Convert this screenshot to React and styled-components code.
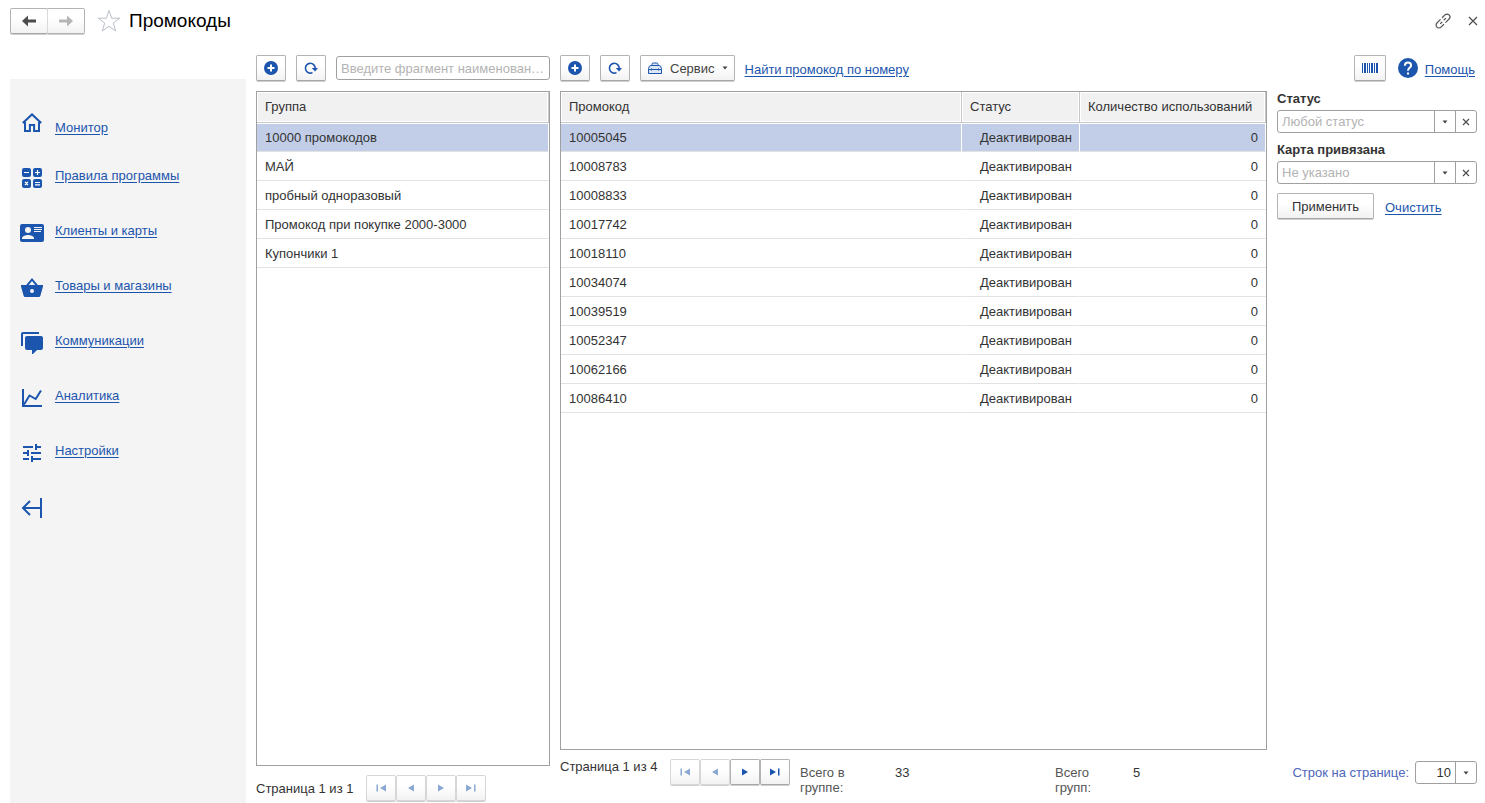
import React from 'react';
import styled, { createGlobalStyle, css } from 'styled-components';

const GlobalStyle = createGlobalStyle`
    * {
        box-sizing: border-box;
    }

    body {
        margin: 0;
        background: #fff;
        color: #333;
        font-family: "Liberation Sans", Arial, sans-serif;
        font-size: 13px;
        line-height: 15px;
    }

    button, input, select {
        font: inherit;
        color: inherit;
    }
`;

const Page = styled.div`
    display: flex;
    flex-direction: column;
    min-height: 100vh;
`;

const Header = styled.header`
    display: flex;
    align-items: center;
    padding: 8px 2px 7px 10px;
`;

const History = styled.div`
    display: flex;
`;

const raised = css`
    display: inline-flex;
    align-items: center;
    justify-content: center;
    height: 26px;
    padding: 0;
    background: linear-gradient(#fff 40%, #f2f2f2);
    border: 1px solid #b3b3b3;
    border-bottom-color: #a6a6a6;
    border-radius: 2px;
    box-shadow: 0 1px 0 #d0d0d0;
    cursor: pointer;

    &:disabled {
        border-color: #d6d6d6;
        cursor: default;
    }
`;

const HistoryButton = styled.button`
    ${raised}
    width: 38px;

    &:disabled {
        border-color: #b3b3b3;
    }

    & + & {
        border-left-color: #d9d9d9;
        margin-left: -1px;
    }
`;

const PlainButton = styled.button`
    display: inline-flex;
    align-items: center;
    justify-content: center;
    width: ${props => props.$size || 20}px;
    height: ${props => props.$size || 20}px;
    padding: 0;
    background: none;
    border: none;
    cursor: pointer;
`;

const Favourite = styled(PlainButton)`
    margin: 0 8px 0 12px;
`;

const Title = styled.h1`
    flex: 1;
    margin: 0;
    color: #000;
    font-size: 19px;
    font-weight: 400;
    line-height: 24px;
`;

const WindowTools = styled.div`
    display: flex;
    gap: 10px;
`;

const Body = styled.div`
    display: flex;
    flex: 1;
    gap: 10px;
    padding: 0 8px 0 10px;
`;

const Sidebar = styled.nav`
    display: flex;
    flex-direction: column;
    flex: 0 0 236px;
    margin-top: 38px;
    padding: 32px 10px;
    background: #f4f4f4;
`;

const MenuList = styled.div`
    display: flex;
    flex-direction: column;
    align-items: flex-start;
    gap: 31px;
    margin-top: 28px;
`;

const MenuItem = styled.a`
    display: flex;
    gap: 11px;
    color: #1c55ae;
    line-height: 20px;
    text-decoration: none;

    svg {
        flex: none;
    }

    span {
        text-decoration: underline;
        text-underline-offset: 2px;
    }
`;

const HomeItem = styled(MenuItem)`
    align-items: flex-end;
    height: 27px;

    svg {
        align-self: flex-start;
    }
`;

const Collapse = styled(PlainButton)`
    color: #1c55ae;
`;

const Groups = styled.section`
    display: flex;
    flex-direction: column;
    flex: 0 0 294px;
    gap: 9px;
    padding: 14px 0 2px;
`;

const Promo = styled.section`
    display: flex;
    flex-direction: column;
    flex: 1;
    min-width: 0;
    gap: 9px;
    padding: 14px 0 8px;
`;

const Toolbar = styled.div`
    display: flex;
    align-items: center;
    gap: 10px;
    height: 27px;
    padding-bottom: 1px;
`;

const ToolButton = styled.button`
    ${raised}
    width: ${props => props.$width || 30}px;
    color: #1c55ae;
`;

const ServiceButton = styled.button`
    ${raised}
    gap: 7px;
    padding: 0 6px;
    color: #444;
`;

const Link = styled.a`
    color: #1c55ae;
    line-height: 17px;
    padding-top: 2px;
    text-decoration: underline;
    text-underline-offset: 2px;
`;

const HelpLink = styled(Link)`
    display: flex;
    align-items: center;
    gap: 7px;
    padding: 0 2px;

    span {
        padding-top: 2px;
    }
`;

const Spacer = styled.div`
    flex: 1;
`;

const SearchInput = styled.input`
    flex: 1;
    min-width: 0;
    height: 24px;
    padding: 0 4px;
    border: 1px solid #a0a0a0;
    border-radius: 3px;
    text-overflow: ellipsis;

    &::placeholder {
        color: #b3b3b3;
    }
`;

const Split = styled.div`
    display: flex;
    flex: 1;
    gap: 10px;
`;

const TableFrame = styled.div`
    flex: 1;
    min-width: 0;
    border: 1px solid #a0a0a0;
`;

const Table = styled.table`
    width: 100%;
    table-layout: fixed;
    border-collapse: separate;
    border-spacing: 0;
`;

const HeadCell = styled.th`
    width: ${props => props.$width || 'auto'};
    height: 31px;
    padding: 0 8px 2px;
    background: #f1f1f1;
    border-right: 1px solid #c8c8c8;
    border-bottom: 1px solid #c8c8c8;
    box-shadow: inset 0 0 0 1px #fff;
    font-weight: 400;
    text-align: left;
    white-space: nowrap;
`;

const Row = styled.tr`
    background: ${props => (props.$selected ? '#c2cee8' : '#fff')};
`;

const Cell = styled.td`
    height: 29px;
    padding: 0 7px 0 8px;
    border-right: ${props => (props.$selected ? '1px solid #fff' : '1px solid transparent')};
    border-bottom: 1px solid #e2e2e2;
    box-shadow: inset 0 1px 0 #fff;
    text-align: ${props => props.$align || 'left'};
    white-space: nowrap;
`;

const Filters = styled.form`
    flex: 0 0 200px;
`;

const FilterField = styled.div`
    display: flex;
    flex-direction: column;
    gap: 4px;
    margin-bottom: 9px;

    label {
        font-weight: 700;
    }
`;

const Combo = styled.div`
    display: grid;
    grid-template-columns: 1fr 21px ${props => (props.$clearable ? '21px' : '')};
    width: ${props => props.$width || '100%'};
    height: 23px;
    border: 1px solid #a0a0a0;
    border-radius: 3px;
`;

const Select = styled.select`
    grid-row: 1;
    grid-column: 1 / 3;
    width: 100%;
    padding: 0 25px 0 4px;
    appearance: none;
    background: none;
    border: none;
    color: ${props => (props.$empty ? '#b3b3b3' : '#333')};
    text-align: ${props => props.$align || 'left'};
    text-align-last: ${props => props.$align || 'left'};
`;

const ComboArrow = styled.span`
    display: flex;
    grid-row: 1;
    grid-column: 2;
    align-items: center;
    justify-content: center;
    border-left: 1px solid #a0a0a0;
    pointer-events: none;
`;

const ComboClear = styled.button`
    display: flex;
    align-items: center;
    justify-content: center;
    padding: 0;
    background: none;
    border: none;
    border-left: 1px solid #a0a0a0;
    cursor: pointer;
`;

const FilterActions = styled.div`
    display: flex;
    align-items: center;
    gap: 11px;
`;

const ApplyButton = styled.button`
    ${raised}
    width: 97px;
`;

const Pager = styled.div`
    display: flex;
    align-items: ${props => props.$align || 'center'};
    gap: 10px;
`;

const PageText = styled.span`
    width: 100px;
    white-space: nowrap;
`;

const PagerButtons = styled.div`
    display: flex;
`;

const PagerButton = styled(ToolButton)`
    svg {
        opacity: ${props => (props.disabled ? 0.5 : 1)};
    }
`;

const Stats = styled.div`
    display: flex;
    gap: 10px;
    padding-top: 6px;
`;

const StatLabel = styled.span`
    width: ${props => props.$width}px;
    color: #555;
`;

const StatValue = styled.span`
    width: ${props => props.$width}px;
`;

const RowsPerPage = styled.div`
    display: flex;
    align-items: center;
    gap: 6px;
    padding-top: 2px;
    margin-left: auto;

    label {
        color: #4d66bb;
        white-space: nowrap;
    }
`;

const Icon = ({ size = 24, width = size, height = size, children }) => (
    <svg width={width} height={height} viewBox={`0 0 ${width} ${height}`} fill="currentColor" aria-hidden="true">
        {children}
    </svg>
);

const HistoryArrow = ({ forward }) => (
    <Icon width={14} height={12}>
        <path
            d="M0 6 6 0.5V4.500H14V7.500H6V11.500Z"
            fill={forward ? '#b5b5b5' : '#4d4d4d'}
            transform={forward ? 'rotate(180 7 6)' : undefined}
        />
    </Icon>
);

const StarIcon = () => (
    <Icon>
        <path
            d="M12 1.500 14.700 9.200H22.700L16.300 14.100 18.700 22 12 17.300 5.300 22 7.700 14.100 1.300 9.200H9.300Z"
            fill="none"
            stroke="#b9bec8"
        />
    </Icon>
);

const ChainIcon = () => (
    <Icon size={20}>
        <g fill="none" stroke="#555" strokeWidth="1.200" strokeLinecap="round" transform="rotate(-45 10 10)">
            <path d="M8 12.900H4.300a2.900 2.900 0 0 1 0-5.800H9" />
            <path d="M12 7.100H15.700a2.900 2.900 0 0 1 0 5.800H11" />
            <path d="M6.500 10H8.500M11.500 10H13.500" />
        </g>
    </Icon>
);

const CloseIcon = ({ size = 20, arm = 4 }) => (
    <Icon size={size}>
        <path
            d={`M${size / 2 - arm} ${size / 2 - arm}l${arm * 2} ${arm * 2}m0 ${-arm * 2}l${-arm * 2} ${arm * 2}`}
            stroke="#4d4d4d"
            strokeWidth="1.200"
        />
    </Icon>
);

const HomeIcon = () => (
    <Icon>
        <path
            d="M2.800 12 12 3.400 21.200 12M5 11V20H9.900V14H14.100V20H19V11"
            fill="none"
            stroke="currentColor"
            strokeWidth="2"
        />
    </Icon>
);

const RulesIcon = () => (
    <Icon>
        <rect x="2" y="2" width="9" height="9" rx="2" />
        <rect x="13" y="2" width="9" height="9" rx="2" />
        <rect x="2" y="13" width="9" height="9" rx="2" />
        <rect x="13" y="13" width="9" height="9" rx="2" />
        <path
            d="M4 6.500H9M15 6.500H20M17.500 4V9M15 16.500H20M15 18.800H20M5 16l3 3M8 16l-3 3"
            stroke="#fff"
            strokeWidth="1.200"
        />
    </Icon>
);

const CardIcon = () => (
    <Icon>
        <rect y="3" width="24" height="18" rx="2" />
        <g fill="#f4f4f4">
            <circle cx="8" cy="9" r="3" />
            <path d="M2 18V17C2 15 6 13.900 8 13.900S14 15 14 17V18Z" />
            <path d="M14 6H22V7H14ZM14 8H22V9H14ZM14 10H21V11H14Z" />
        </g>
    </Icon>
);

const BasketIcon = () => (
    <Icon>
        <path d="M1 9H6.200L12 2 17.800 9H23V10.500L20.300 20Q20 21 19 21H5Q4 21 3.700 20L1 10.500ZM8.800 9H15.200L12 5Z" fillRule="evenodd" />
        <circle cx="12" cy="15" r="2" fill="#f4f4f4" />
    </Icon>
);

const ChatIcon = () => (
    <Icon>
        <path d="M1 15V3Q1 1 3 1H19V3H3V15Z" />
        <path d="M7 5H21Q23 5 23 7V17Q23 19 21 19H17L13 23H12V19H7Q5 19 5 17V7Q5 5 7 5Z" />
    </Icon>
);

const ChartIcon = () => (
    <Icon>
        <path d="M3 3V20H22M4 18.500 9.500 9.500 15.700 13 21 4.500" fill="none" stroke="currentColor" strokeWidth="2" />
    </Icon>
);

const SettingsIcon = () => (
    <Icon>
        <path
            d="M3 6H13M16 3V9M16 6H21M3 12H9M8 9V15M11 12H21M3 18H9M12 15V21M12 18H21"
            fill="none"
            stroke="currentColor"
            strokeWidth="2"
        />
    </Icon>
);

const CollapseIcon = () => (
    <Icon>
        <path d="M21 2V22M20 12H3.500M10 5 3 12 10 19" fill="none" stroke="currentColor" strokeWidth="2" />
    </Icon>
);

const PlusIcon = () => (
    <Icon size={14}>
        <circle cx="7" cy="7" r="7" />
        <path d="M7 3.500V10.500M3.500 7H10.500" stroke="#fff" strokeWidth="2" />
    </Icon>
);

const RefreshIcon = () => (
    <Icon size={14}>
        <path d="M8.500 11.600A4.900 4.900 0 1 1 11.200 7.500" fill="none" stroke="currentColor" strokeWidth="1.600" />
        <path d="M7.800 7H14L11 10.400Z" />
    </Icon>
);

const ServiceIcon = () => (
    <Icon width={16} height={14}>
        <g fill="#dce6f7" stroke="#1c55ae">
            <path d="M5 4.500V3.300Q5 2 6.300 2H9.700Q11 2 11 3.300V4.500" />
            <path d="M4 4.500H12Q14 4.500 14.500 7.500V8.500H1.500V7.500Q2 4.500 4 4.500Z" />
            <path d="M1.500 8.500H14.500V12.500H1.500Z" />
            <path d="M4.500 7.500V9.500M11.500 7.500V9.500" />
        </g>
    </Icon>
);

const BarcodeIcon = () => (
    <Icon width={16} height={10}>
        <path d="M0 0H1V10H0ZM2 0H4V10H2ZM5 0H6V10H5ZM7 0H8V10H7ZM9 0H11V10H9ZM12 0H13V10H12ZM14 0H16V10H14Z" />
    </Icon>
);

const HelpIcon = () => (
    <Icon size={20}>
        <circle cx="10" cy="10" r="10" />
        <path d="M6.900 7.700Q6.900 4.600 10 4.600T13.100 7.400C13.100 9.500 10 9.500 10 12.700" fill="none" stroke="#fff" strokeWidth="2" />
        <path d="M9 14.500H11V16.500H9Z" fill="#fff" />
    </Icon>
);

const CaretIcon = () => (
    <Icon width={6} height={4}>
        <path d="M0.500 0.500H5.500L3 3.500Z" fill="#444" />
    </Icon>
);

const PagerIcon = ({ back, edge }) => (
    <Icon width={12} height={8}>
        <g transform={back ? 'rotate(180 6 4)' : undefined}>
            <path d={edge ? 'M1 0.500 7 4 1 7.500Z' : 'M3 0.500 9 4 3 7.500Z'} />
            {edge && <path d="M9 0.500H10.500V7.500H9Z" />}
        </g>
    </Icon>
);

const menu = [
    { label: 'Правила программы', icon: RulesIcon },
    { label: 'Клиенты и карты', icon: CardIcon },
    { label: 'Товары и магазины', icon: BasketIcon },
    { label: 'Коммуникации', icon: ChatIcon },
    { label: 'Аналитика', icon: ChartIcon },
    { label: 'Настройки', icon: SettingsIcon },
];

const groups = [
    '10000 промокодов',
    'МАЙ',
    'пробный одноразовый',
    'Промокод при покупке 2000-3000',
    'Купончики 1',
];

const promocodes = [
    '10005045', '10008783', '10008833', '10017742', '10018110',
    '10034074', '10039519', '10052347', '10062166', '10086410',
].map(code => ({ code, status: 'Деактивирован', uses: 0 }));

const PageButtons = ({ first, last }) => (
    <PagerButtons>
        <PagerButton type="button" disabled={first} aria-label="Первая страница"><PagerIcon back edge /></PagerButton>
        <PagerButton type="button" disabled={first} aria-label="Предыдущая страница"><PagerIcon back /></PagerButton>
        <PagerButton type="button" disabled={last} aria-label="Следующая страница"><PagerIcon /></PagerButton>
        <PagerButton type="button" disabled={last} aria-label="Последняя страница"><PagerIcon edge /></PagerButton>
    </PagerButtons>
);

const Filter = ({ id, label, empty, options, value, onChange }) => (
    <FilterField>
        <label htmlFor={id}>{label}</label>
        <Combo $clearable>
            <Select id={id} value={value} $empty={!value} onChange={event => onChange(event.target.value)}>
                <option value="">{empty}</option>
                {options.map(option => <option key={option}>{option}</option>)}
            </Select>
            <ComboArrow><CaretIcon /></ComboArrow>
            <ComboClear type="button" aria-label="Сбросить" onClick={() => onChange('')}>
                <CloseIcon size={10} arm={3} />
            </ComboClear>
        </Combo>
    </FilterField>
);

export default function App() {
    const [group, setGroup] = React.useState(groups[0]);
    const [code, setCode] = React.useState(promocodes[0].code);
    const [status, setStatus] = React.useState('');
    const [card, setCard] = React.useState('');
    const [rows, setRows] = React.useState('10');

    const handleClear = (event) => {
        event.preventDefault();
        setStatus('');
        setCard('');
    };

    return (
        <Page>
            <GlobalStyle />
            <Header>
                <History>
                    <HistoryButton type="button" aria-label="Назад"><HistoryArrow /></HistoryButton>
                    <HistoryButton type="button" aria-label="Вперед" disabled><HistoryArrow forward /></HistoryButton>
                </History>
                <Favourite type="button" $size={24} aria-label="В избранное"><StarIcon /></Favourite>
                <Title>Промокоды</Title>
                <WindowTools>
                    <PlainButton type="button" aria-label="Ссылка"><ChainIcon /></PlainButton>
                    <PlainButton type="button" aria-label="Закрыть"><CloseIcon /></PlainButton>
                </WindowTools>
            </Header>
            <Body>
                <Sidebar>
                    <HomeItem href="#"><HomeIcon /><span>Монитор</span></HomeItem>
                    <MenuList>
                        {menu.map(({ label, icon: MenuIcon }) => (
                            <MenuItem href="#" key={label}><MenuIcon /><span>{label}</span></MenuItem>
                        ))}
                        <Collapse type="button" $size={24} aria-label="Свернуть"><CollapseIcon /></Collapse>
                    </MenuList>
                </Sidebar>

                <Groups>
                    <Toolbar>
                        <ToolButton type="button" aria-label="Добавить группу"><PlusIcon /></ToolButton>
                        <ToolButton type="button" aria-label="Обновить группы"><RefreshIcon /></ToolButton>
                        <SearchInput aria-label="Поиск группы" placeholder="Введите фрагмент наименования" />
                    </Toolbar>
                    <TableFrame>
                        <Table>
                            <thead>
                                <tr><HeadCell>Группа</HeadCell></tr>
                            </thead>
                            <tbody>
                                {groups.map(name => (
                                    <Row key={name} $selected={name === group} onClick={() => setGroup(name)}>
                                        <Cell $selected={name === group}>{name}</Cell>
                                    </Row>
                                ))}
                            </tbody>
                        </Table>
                    </TableFrame>
                    <Pager>
                        <PageText>Страница 1 из 1</PageText>
                        <PageButtons first last />
                    </Pager>
                </Groups>

                <Promo>
                    <Toolbar>
                        <ToolButton type="button" aria-label="Добавить промокод"><PlusIcon /></ToolButton>
                        <ToolButton type="button" aria-label="Обновить промокоды"><RefreshIcon /></ToolButton>
                        <ServiceButton type="button"><ServiceIcon />Сервис<CaretIcon /></ServiceButton>
                        <Link href="#">Найти промокод по номеру</Link>
                        <Spacer />
                        <ToolButton type="button" $width={32} aria-label="Сканировать"><BarcodeIcon /></ToolButton>
                        <HelpLink href="#"><HelpIcon /><span>Помощь</span></HelpLink>
                    </Toolbar>
                    <Split>
                        <TableFrame>
                            <Table>
                                <thead>
                                    <tr>
                                        <HeadCell>Промокод</HeadCell>
                                        <HeadCell $width="118px">Статус</HeadCell>
                                        <HeadCell $width="186px">Количество использований</HeadCell>
                                    </tr>
                                </thead>
                                <tbody>
                                    {promocodes.map(item => (
                                        <Row key={item.code} $selected={item.code === code} onClick={() => setCode(item.code)}>
                                            <Cell $selected={item.code === code}>{item.code}</Cell>
                                            <Cell $selected={item.code === code} $align="right">{item.status}</Cell>
                                            <Cell $selected={item.code === code} $align="right">{item.uses}</Cell>
                                        </Row>
                                    ))}
                                </tbody>
                            </Table>
                        </TableFrame>
                        <Filters onSubmit={event => event.preventDefault()}>
                            <Filter
                                id="status"
                                label="Статус"
                                empty="Любой статус"
                                options={['Активирован', 'Деактивирован']}
                                value={status}
                                onChange={setStatus}
                            />
                            <Filter
                                id="card"
                                label="Карта привязана"
                                empty="Не указано"
                                options={['Да', 'Нет']}
                                value={card}
                                onChange={setCard}
                            />
                            <FilterActions>
                                <ApplyButton type="submit">Применить</ApplyButton>
                                <Link href="#" onClick={handleClear}>Очистить</Link>
                            </FilterActions>
                        </Filters>
                    </Split>
                    <Pager $align="flex-start">
                        <PageText>Страница 1 из 4</PageText>
                        <PageButtons first />
                        <Stats>
                            <StatLabel $width={85}>Всего в группе:</StatLabel>
                            <StatValue $width={150}>33</StatValue>
                            <StatLabel $width={68}>Всего групп:</StatLabel>
                            <StatValue $width={30}>5</StatValue>
                        </Stats>
                        <RowsPerPage>
                            <label htmlFor="rows">Строк на странице:</label>
                            <Combo $width="62px">
                                <Select id="rows" $align="right" value={rows} onChange={event => setRows(event.target.value)}>
                                    <option>10</option>
                                    <option>20</option>
                                    <option>50</option>
                                </Select>
                                <ComboArrow><CaretIcon /></ComboArrow>
                            </Combo>
                        </RowsPerPage>
                    </Pager>
                </Promo>
            </Body>
        </Page>
    );
}
